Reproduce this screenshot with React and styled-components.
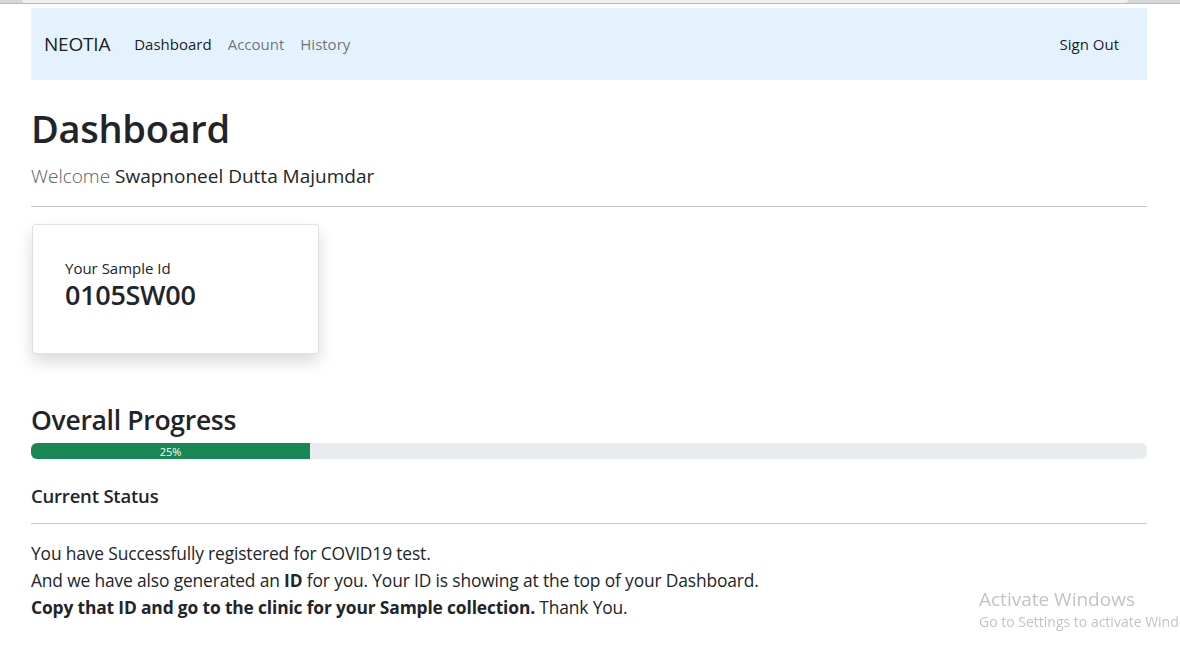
import React from 'react';
import styled, { createGlobalStyle } from 'styled-components';

const GlobalStyle = createGlobalStyle`
  html, body {
    margin: 0;
    padding: 0;
    background: #fff;
    overflow: hidden;
  }
  body {
    font-family: "Open Sans", "Noto Sans", sans-serif;
    color: #212529;
  }
`;

const BrowserEdge = styled.div`
  height: 3px;
  background: #d6d7da;
  border-bottom: 1px solid #b9babd;
  display: flex;
  padding: 0 52px 0 22px;
`;

const EdgeTab = styled.div`
  flex: 1;
  background: #eeeff1;
  border-radius: 0 0 6px 6px;
`;

const Page = styled.div`
  width: 1116px;
  margin: 4px 0 0 31px;
`;

const Navbar = styled.nav`
  height: 72px;
  background: #e3f2fd;
  display: flex;
  align-items: center;
  padding: 0 20px 0 13px;
`;

const Brand = styled.span`
  font-size: 19px;
  color: rgba(0, 0, 0, 0.9);
  margin-right: 16px;
  letter-spacing: -0.2px;
`;

const NavLink = styled.a`
  font-size: 15px;
  padding: 0 8px;
  color: ${p => (p.active ? 'rgba(0, 0, 0, 0.9)' : 'rgba(0, 0, 0, 0.55)')};
  text-decoration: none;
  margin-left: ${p => (p.end ? 'auto' : '0')};
`;

const Title = styled.h1`
  font-size: 38px;
  font-weight: 600;
  line-height: 1.2;
  margin: 26px 0 11px;
  letter-spacing: -0.3px;
`;

const Lead = styled.p`
  font-size: 19px;
  font-weight: 300;
  margin: 0;
  color: #5a5d61;
`;

const Name = styled.span`
  font-weight: 400;
  color: #212529;
`;

const Rule = styled.hr`
  border: 0;
  border-top: 1px solid #c6c7c8;
  margin: ${p => p.gap || '16px 0'};
`;

const Card = styled.div`
  width: 221px;
  height: 64px;
  padding: 28px 32px 36px;
  margin: 0 0 0 1px;
  background: #fff;
  border: 1px solid rgba(0, 0, 0, 0.12);
  border-radius: 4px;
  box-shadow: 0 8px 16px rgba(0, 0, 0, 0.15);
  display: flex;
  flex-direction: column;
  justify-content: center;
`;

const CardLabel = styled.div`
  font-size: 15px;
  line-height: 20px;
`;

const CardValue = styled.div`
  font-size: 27px;
  font-weight: 600;
  line-height: 34px;
  letter-spacing: -0.3px;
`;

const SectionTitle = styled.h2`
  font-size: 26.5px;
  font-weight: 600;
  line-height: 1.2;
  margin: 51px 0 7px;
  letter-spacing: -0.3px;
`;

const Progress = styled.div`
  height: 16px;
  background: #e9ecef;
  border-radius: 6px;
  overflow: hidden;
  display: flex;
`;

const ProgressBar = styled.div`
  background: #198754;
  color: #fff;
  font-size: 11px;
  display: flex;
  align-items: center;
  justify-content: center;
`;

const SubTitle = styled.h5`
  font-size: 18.5px;
  font-weight: 600;
  line-height: 1.2;
  margin: 26px 0 0;
  letter-spacing: -0.2px;
`;

const Message = styled.div`
  font-size: 17.4px;
  line-height: 27px;
  letter-spacing: -0.15px;
`;

const Watermark = styled.div`
  position: fixed;
  left: 979px;
  top: 586px;
  white-space: nowrap;
  color: rgba(120, 120, 120, 0.45);
`;

const WatermarkTitle = styled.div`
  font-size: 19px;
  line-height: 26px;
`;

const WatermarkText = styled.div`
  font-size: 14px;
  line-height: 20px;
`;

export default function App() {
  const progress = 25;
  return (
    <>
      <GlobalStyle />
      <BrowserEdge>
        <EdgeTab />
      </BrowserEdge>
      <Page>
        <Navbar>
          <Brand>NEOTIA</Brand>
          <NavLink active>Dashboard</NavLink>
          <NavLink>Account</NavLink>
          <NavLink>History</NavLink>
          <NavLink active end>Sign Out</NavLink>
        </Navbar>

        <Title>Dashboard</Title>
        <Lead>
          Welcome <Name>Swapnoneel Dutta Majumdar</Name>
        </Lead>
        <Rule gap="17px 0 17px" />

        <Card>
          <CardLabel>Your Sample Id</CardLabel>
          <CardValue>0105SW00</CardValue>
        </Card>

        <SectionTitle>Overall Progress</SectionTitle>
        <Progress>
          <ProgressBar style={{ width: `${progress}%` }}>{progress}%</ProgressBar>
        </Progress>

        <SubTitle>Current Status</SubTitle>
        <Rule gap="15px 0 16px" />
        <Message>
          <div>You have Successfully registered for COVID19 test.</div>
          <div>
            And we have also generated an <b>ID</b> for you. Your ID is showing at the top of your Dashboard.
          </div>
          <div>
            <b>Copy that ID and go to the clinic for your Sample collection.</b> Thank You.
          </div>
        </Message>
      </Page>

      <Watermark>
        <WatermarkTitle>Activate Windows</WatermarkTitle>
        <WatermarkText>Go to Settings to activate Windows.</WatermarkText>
      </Watermark>
    </>
  );
}
